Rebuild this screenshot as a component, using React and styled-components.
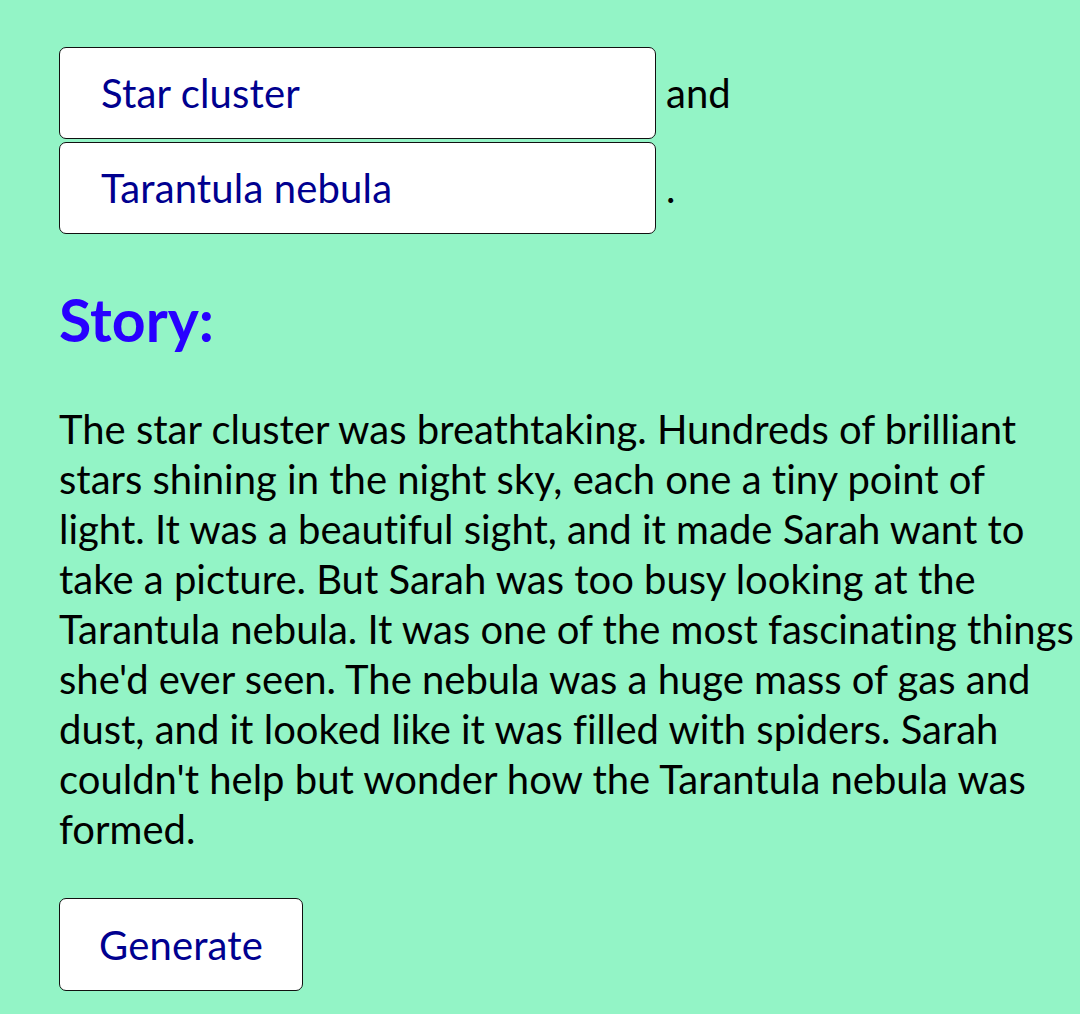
import React, { useState } from "react";
import styled, { createGlobalStyle } from "styled-components";

const GlobalStyle = createGlobalStyle`
  html, body {
    margin: 0;
    padding: 0;
    background: #93f4c6;
    overflow: hidden;
  }
  body {
    font-family: "Lato", "Liberation Sans", sans-serif;
    color: #000;
  }
`;

// broken where the original layout breaks them
const storyLines = [
  "The star cluster was breathtaking. Hundreds of brilliant",
  "stars shining in the night sky, each one a tiny point of",
  "light. It was a beautiful sight, and it made Sarah want to",
  "take a picture. But Sarah was too busy looking at the",
  "Tarantula nebula. It was one of the most fascinating things",
  "she'd ever seen. The nebula was a huge mass of gas and",
  "dust, and it looked like it was filled with spiders. Sarah",
  "couldn't help but wonder how the Tarantula nebula was",
  "formed.",
];

export default function App() {
  const [first, setFirst] = useState("Star cluster");
  const [second, setSecond] = useState("Tarantula nebula");

  return (
    <Page>
      <GlobalStyle />
      <Prompt>
        <PromptRow>
          <TextField value={first} onChange={(e) => setFirst(e.target.value)} />
          <Joiner>and</Joiner>
        </PromptRow>
        <PromptRow>
          <TextField value={second} onChange={(e) => setSecond(e.target.value)} />
          <Joiner>.</Joiner>
        </PromptRow>
      </Prompt>
      <Heading>Story:</Heading>
      <Story>
        {storyLines.map((line, i) => (
          <React.Fragment key={i}>
            {line}
            {i < storyLines.length - 1 && <br />}
          </React.Fragment>
        ))}
      </Story>
      <Button type="button">Generate</Button>
    </Page>
  );
}

const Page = styled.main`
  padding: 47px 0 16px 59px;
`;

const Prompt = styled.div`
  display: flex;
  flex-direction: column;
  gap: 3px;
`;

const PromptRow = styled.div`
  display: flex;
  align-items: baseline;
  gap: 10px;
`;

const TextField = styled.input`
  width: 597px;
  height: 92px;
  box-sizing: border-box;
  padding: 0 41px;
  font-family: inherit;
  font-size: 40px;
  letter-spacing: 0.15px;
  color: #00008f;
  background: #fff;
  border: 1.5px solid #111;
  border-radius: 7px;
  outline: none;
`;

const Joiner = styled.span`
  font-size: 40px;
`;

const Heading = styled.h2`
  margin: 50px 0 0;
  font-size: 59px;
  font-weight: 700;
  line-height: 72px;
  color: #2800ff;
`;

const Story = styled.p`
  margin: 48px 0 0;
  font-size: 40px;
  line-height: 50px;
  white-space: nowrap;
  font-variant-ligatures: no-common-ligatures;
`;

const Button = styled.button`
  display: block;
  margin-top: 44px;
  width: 244px;
  height: 93px;
  padding: 0;
  font-family: inherit;
  font-size: 40px;
  letter-spacing: 0.15px;
  color: #00008f;
  background: #fff;
  border: 1.5px solid #111;
  border-radius: 7px;
  cursor: pointer;
`;
